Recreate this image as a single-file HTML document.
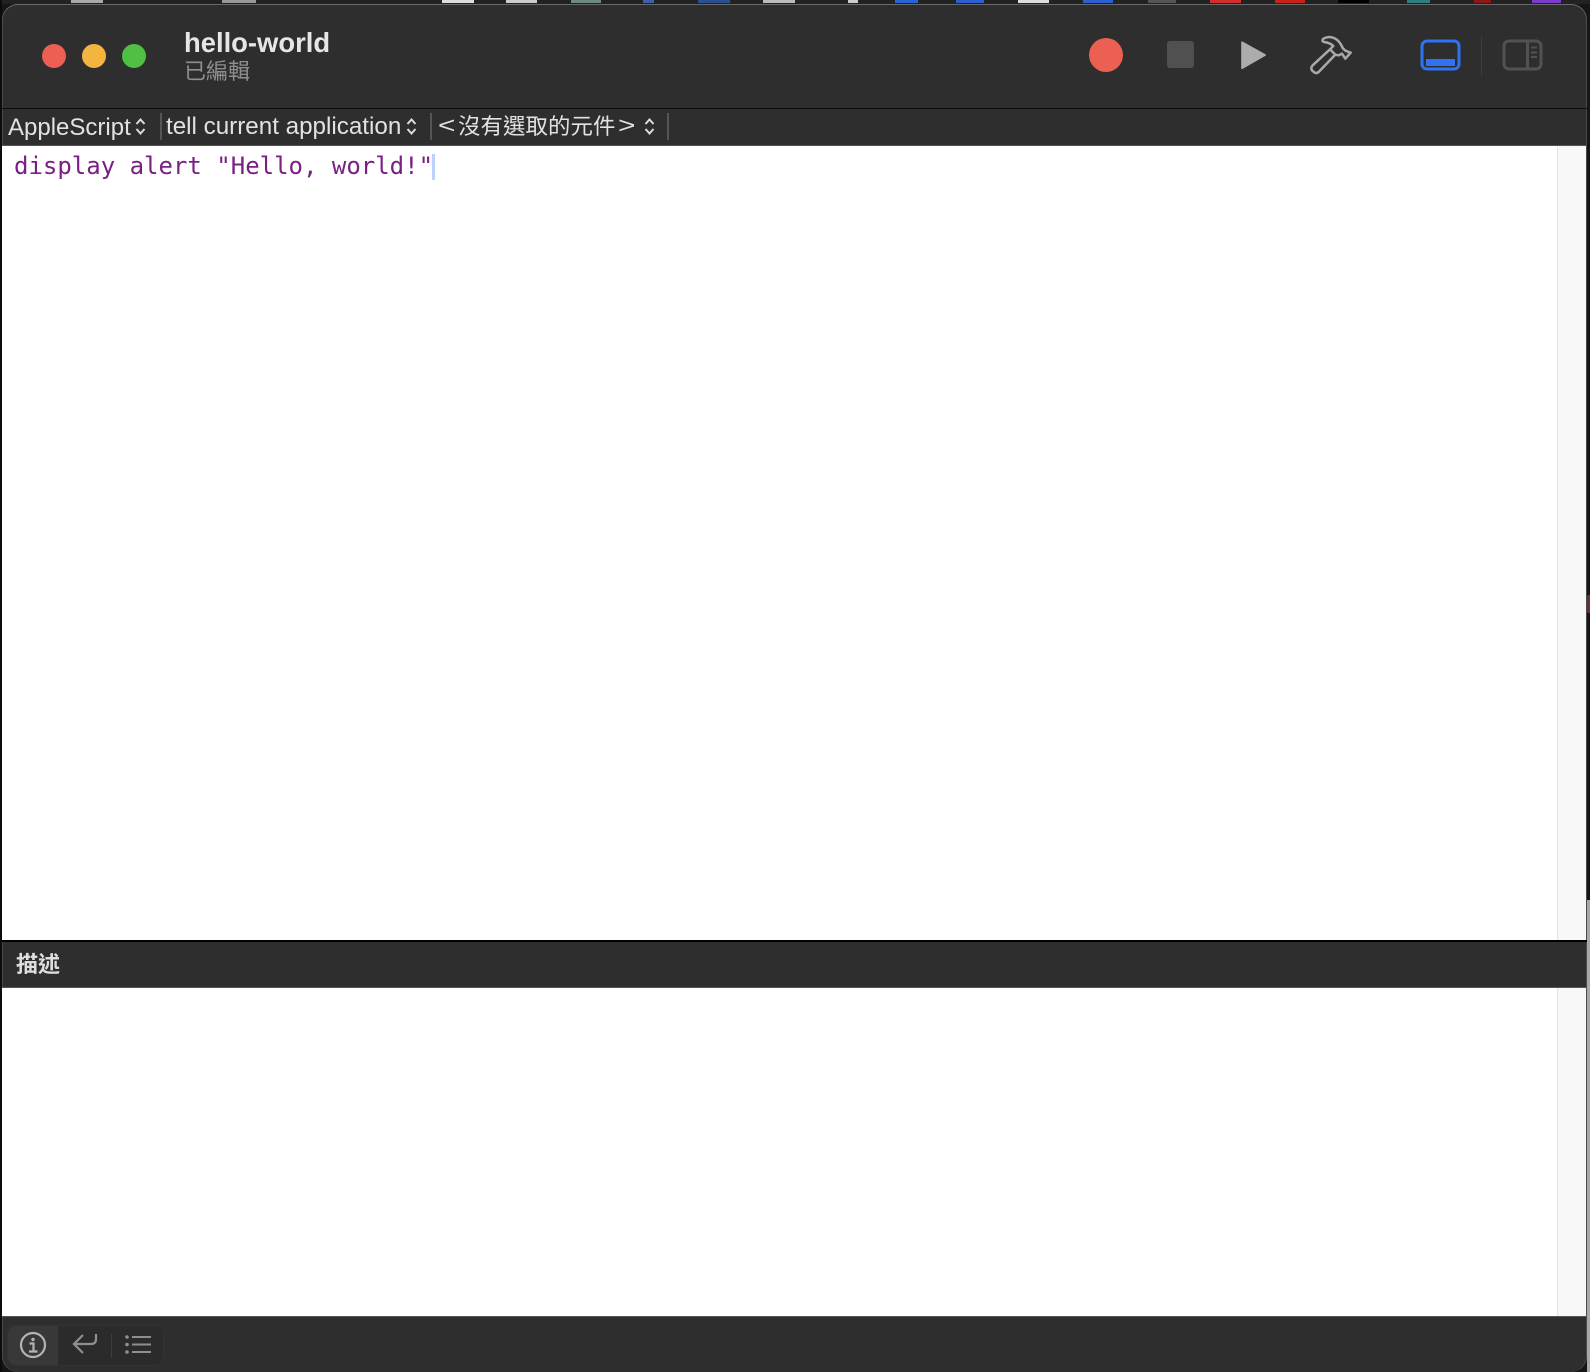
<!DOCTYPE html>
<html><head><meta charset="utf-8">
<style>
html,body{margin:0;padding:0;width:1590px;height:1372px;overflow:hidden;background:#161616}
div,span,svg{position:absolute}
.t{font-family:"Liberation Sans","Noto Sans CJK TC",sans-serif;white-space:nowrap;color:#e2e2e2}
.sep{width:2px;background:#555;top:113px;height:27px}
</style></head><body>
<!-- desktop behind -->
<div style="left:0;top:0;width:1590px;height:4px;background:#222"></div>
<div style="left:71px;top:0;width:32px;height:3px;background:#aaa"></div>
<div style="left:222px;top:0;width:34px;height:3px;background:#999"></div>
<div style="left:442px;top:0;width:32px;height:3px;background:#ddd"></div>
<div style="left:506px;top:0;width:31px;height:3px;background:#ccc"></div>
<div style="left:571px;top:0;width:30px;height:3px;background:#6f8a80"></div>
<div style="left:643px;top:0;width:11px;height:3px;background:#3f5fa8"></div>
<div style="left:698px;top:0;width:32px;height:3px;background:#2c4f8f"></div>
<div style="left:763px;top:0;width:32px;height:3px;background:#bbb"></div>
<div style="left:848px;top:0;width:10px;height:3px;background:#ccc"></div>
<div style="left:895px;top:0;width:23px;height:3px;background:#2b62d6"></div>
<div style="left:956px;top:0;width:28px;height:3px;background:#2b5fd0"></div>
<div style="left:1018px;top:0;width:31px;height:3px;background:#ddd"></div>
<div style="left:1083px;top:0;width:30px;height:3px;background:#2c5fd0"></div>
<div style="left:1148px;top:0;width:28px;height:3px;background:#555"></div>
<div style="left:1210px;top:0;width:31px;height:3px;background:#d0302a"></div>
<div style="left:1275px;top:0;width:30px;height:3px;background:#c8221c"></div>
<div style="left:1338px;top:0;width:31px;height:3px;background:#000"></div>
<div style="left:1407px;top:0;width:23px;height:3px;background:#2e8080"></div>
<div style="left:1474px;top:0;width:17px;height:3px;background:#8a1818"></div>
<div style="left:1532px;top:0;width:29px;height:3px;background:#7a3cc8"></div>
<div style="left:1587px;top:900px;width:3px;height:472px;background:#a8a8a8"></div>
<div style="left:1587px;top:595px;width:3px;height:18px;background:#6a3030"></div>
<div style="left:0;top:0;width:2px;height:1372px;background:#0c0c0c"></div>

<!-- window -->
<div style="left:2px;top:4px;width:1585px;height:1368px;background:#2e2e2e;border-radius:16px 16px 16px 16px;overflow:hidden;box-shadow:inset 0 1px 0 #6a6a6a,inset 1px 0 0 #4a4a4a,inset -1px 0 0 #4a4a4a;">
</div>

<!-- traffic lights -->
<div style="left:42px;top:44px;width:24px;height:24px;border-radius:50%;background:#ec5f53"></div>
<div style="left:82px;top:44px;width:24px;height:24px;border-radius:50%;background:#f4b540"></div>
<div style="left:122px;top:44px;width:24px;height:24px;border-radius:50%;background:#4fbf45"></div>

<div class="t" style="left:184px;top:26px;font-size:27.4px;line-height:33px;font-weight:bold;color:#e6e6e6">hello-world</div>
<div class="t" style="left:184px;top:58px;font-size:22px;line-height:28px;color:#8e8e8e">已編輯</div>

<!-- toolbar icons -->
<div style="left:1089px;top:38px;width:34px;height:34px;border-radius:50%;background:#ec5f53"></div>
<div style="left:1167px;top:41px;width:27px;height:27px;border-radius:3px;background:#505050"></div>
<svg style="left:1240px;top:40px" width="28" height="30" viewBox="0 0 28 30"><path d="M2.5 1.5 L25.5 14.2 Q26.5 15 25.5 15.8 L2.5 29 Q1.2 29.5 1.2 28 V3 Q1.2 1 2.5 1.5 Z" fill="#acacac"/></svg>
<svg style="left:1280px;top:20px" width="80" height="70" viewBox="0 0 240 210"><path d="M98 136 L150 88 L166 104 L116 156 Q108 163 100 155 L96 151 Q91 143 98 136 Z M150 88 L160 78 Q150 68 132 66 Q124 63 130 56 Q148 46 166 56 Q180 64 188 84 L196 92 L212 98 L196 116 L186 101 L176 106 L166 104 Z" fill="none" stroke="#a9a9a9" stroke-width="7.5" stroke-linejoin="round"/></svg>
<svg style="left:1420px;top:39px" width="41" height="32" viewBox="0 0 41 32"><rect x="2" y="2" width="37" height="28" rx="5" fill="none" stroke="#2f73f2" stroke-width="3"/><rect x="6" y="20" width="29" height="7" fill="#2f73f2"/></svg>
<div style="left:1481px;top:36px;width:1px;height:40px;background:#3e3e3e"></div>
<svg style="left:1502px;top:39px" width="41" height="32" viewBox="0 0 41 32"><rect x="2" y="2" width="37" height="28" rx="5" fill="none" stroke="#525252" stroke-width="3"/><path d="M25.5 2 V30" stroke="#525252" stroke-width="3"/><path d="M29 8.5H35M29 13.5H35M29 18H35" stroke="#525252" stroke-width="2"/></svg>

<div style="left:2px;top:108px;width:1585px;height:1px;background:#0c0c0c"></div>

<!-- navigation bar -->
<div class="t" style="left:8px;top:113px;font-size:24px;line-height:29px">AppleScript</div>
<svg style="left:134px;top:117px" width="13" height="19" viewBox="0 0 13 19"><path d="M2.5 7 L6.5 2.5 L10.5 7 M2.5 12 L6.5 16.5 L10.5 12" fill="none" stroke="#dcdcdc" stroke-width="2"/></svg>
<div class="sep" style="left:160px"></div>
<div class="t" style="left:166px;top:112px;font-size:24.2px;line-height:29px">tell current application</div>
<svg style="left:405px;top:117px" width="13" height="19" viewBox="0 0 13 19"><path d="M2.5 7 L6.5 2.5 L10.5 7 M2.5 12 L6.5 16.5 L10.5 12" fill="none" stroke="#dcdcdc" stroke-width="2"/></svg>
<div class="sep" style="left:430px"></div>
<div class="t" style="left:438px;top:110px;font-size:23px;line-height:31px;transform:scaleX(1.3);transform-origin:0 50%">&lt;</div>
<div class="t" style="left:458px;top:111px;font-size:22.4px;line-height:31px;letter-spacing:.1px">沒有選取的元件</div>
<div class="t" style="left:618px;top:110px;font-size:23px;line-height:31px;transform:scaleX(1.3);transform-origin:0 50%">&gt;</div>
<svg style="left:643px;top:117px" width="13" height="19" viewBox="0 0 13 19"><path d="M2.5 7 L6.5 2.5 L10.5 7 M2.5 12 L6.5 16.5 L10.5 12" fill="none" stroke="#dcdcdc" stroke-width="2"/></svg>
<div class="sep" style="left:667px"></div>

<div style="left:2px;top:145px;width:1585px;height:1px;background:#555"></div>

<!-- editor -->
<div style="left:2px;top:146px;width:1584px;height:794px;background:#fff"></div>
<div style="left:1557px;top:146px;width:29px;height:794px;background:#f8f8f8;border-left:1px solid #e4e4e4;box-sizing:border-box"></div>
<div class="t" style="left:14px;top:150px;font-family:'DejaVu Sans Mono','Liberation Mono',monospace;font-size:24px;line-height:32px;color:#7a1f84">display alert "Hello, world!"</div>
<div style="left:432px;top:154px;width:3px;height:26px;background:#bcd3f7"></div>

<!-- description header -->
<div style="left:2px;top:940px;width:1585px;height:2px;background:#000"></div>
<div class="t" style="left:16px;top:950px;font-size:22px;line-height:30px;font-weight:bold;color:#dedede">描述</div>
<div style="left:2px;top:987px;width:1585px;height:1px;background:#555"></div>

<!-- description area -->
<div style="left:2px;top:988px;width:1584px;height:328px;background:#fff"></div>
<div style="left:1557px;top:988px;width:29px;height:328px;background:#f8f8f8;border-left:1px solid #e4e4e4;box-sizing:border-box"></div>
<div style="left:2px;top:1316px;width:1585px;height:1px;background:#555"></div>

<!-- bottom segmented control -->
<div style="left:8px;top:1326px;width:155px;height:39px;border-radius:8px;background:#2b2b2b;box-shadow:0 0 0 1px #333"></div>
<div style="left:8px;top:1326px;width:50px;height:39px;border-radius:8px 0 0 8px;background:#383838"></div>
<svg style="left:18px;top:1330px" width="30" height="30" viewBox="0 0 30 30"><circle cx="15" cy="15" r="12" fill="none" stroke="#b4b4b4" stroke-width="2.2"/><circle cx="15" cy="9.5" r="1.7" fill="#b4b4b4"/><path d="M11.5 13.5H15.5V21M11 21.5H19.5" fill="none" stroke="#b4b4b4" stroke-width="2.2"/></svg>
<svg style="left:70px;top:1330px" width="30" height="28" viewBox="0 0 30 28"><path d="M26 4 V9 Q26 14 21 14 H5 M13 5 L4 14 L13 23" fill="none" stroke="#8f8f8f" stroke-width="2.2"/></svg>
<div style="left:111px;top:1334px;width:1px;height:24px;background:#3c3c3c"></div>
<svg style="left:122px;top:1332px" width="34" height="26" viewBox="0 0 34 26"><g fill="#8f8f8f"><circle cx="5" cy="5" r="1.8"/><circle cx="5" cy="12.5" r="1.8"/><circle cx="5" cy="20" r="1.8"/><rect x="10" y="4" width="19" height="2"/><rect x="10" y="11.5" width="19" height="2"/><rect x="10" y="19" width="19" height="2"/></g></svg>
</body></html>
